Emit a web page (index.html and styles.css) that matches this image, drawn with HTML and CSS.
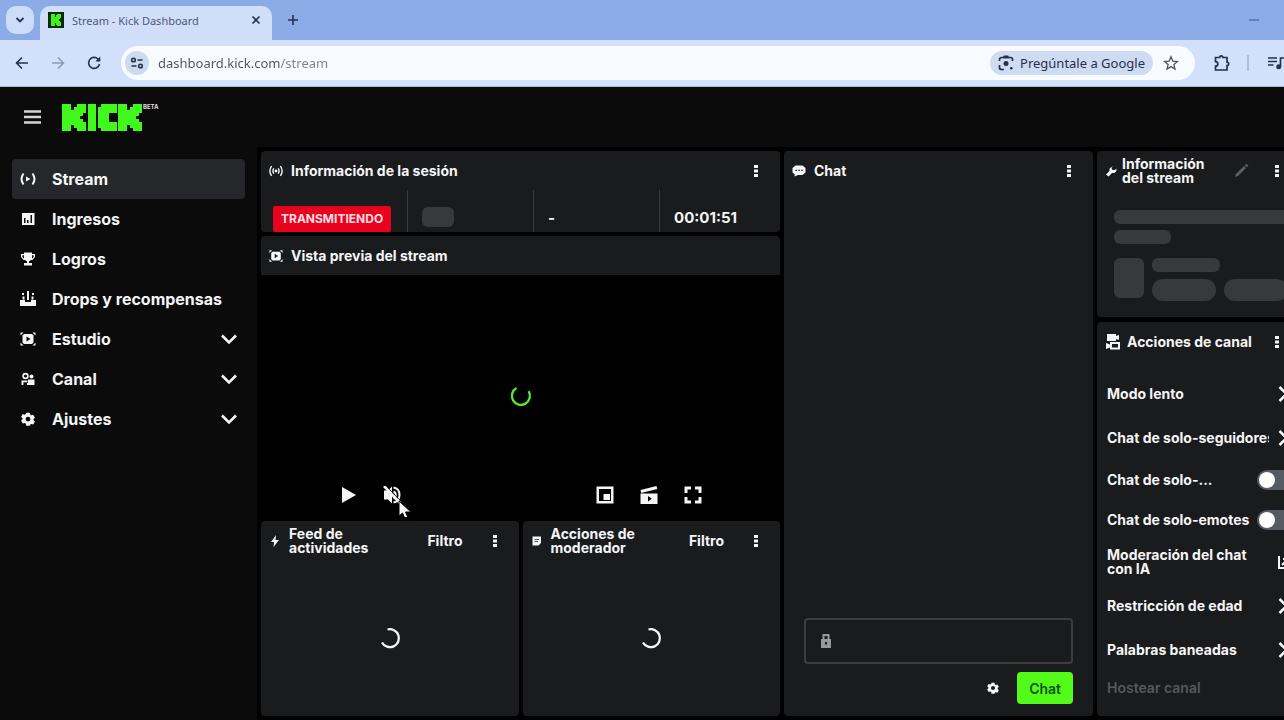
FILE: index.html
```html
<!DOCTYPE html>
<html lang="es">
<head>
<meta charset="utf-8">
<title>Stream - Kick Dashboard</title>
<link rel="stylesheet" href="styles.css">
</head>
<body>
<svg class="defs" aria-hidden="true">
  <symbol id="block-k" viewBox="0 0 8 9"><path shape-rendering="crispEdges" d="M0 0h3v2h1V1h1V0h3v3H7v1H6v1h1v1h1v3H5V8H4V7H3v2H0z"/></symbol>
  <symbol id="kebab" viewBox="0 0 16 16"><rect x="6" y="2" width="4" height="3"/><rect x="6" y="6.500" width="4" height="3"/><rect x="6" y="11" width="4" height="3"/></symbol>
  <symbol id="chevron" viewBox="0 0 16 16"><path d="M1 4.500 8 11.500 15 4.500" fill="none" stroke="currentColor" stroke-width="2.600"/></symbol>
  <symbol id="chevron-right" viewBox="0 0 16 16"><path d="M1.500 1 8.500 8 1.500 15" fill="none" stroke="currentColor" stroke-width="2.600"/></symbol>
  <symbol id="gear" viewBox="0 0 16 16"><path fill-rule="evenodd" d="M6 1h4l.5 2.200 1.200.7 2.100-.7 2 3.400-1.600 1.500v1.300l1.600 1.500-2 3.300-2.100-.7-1.200.7L10 15.500H6l-.5-2.300-1.200-.7-2.100.7-2-3.300 1.600-1.500V7.100L.2 5.600l2-3.100 2.100.7 1.200-.7zM8 5.400a2.700 2.700 0 1 0 0 5.400 2.700 2.700 0 0 0 0-5.400z"/></symbol>
  <symbol id="studio" viewBox="0 0 16 16"><path d="M.5 1.500h3L.5 4.500zM12.500 1.500h3v3zM.5 11.500l3 3h-3zM15.500 11.500v3h-3z"/><path fill-rule="evenodd" d="M4 3h8l1.500 1.500v7L12 13H4l-1.500-1.500v-7zM6.500 5.500v5L10.500 8z"/></symbol>
</svg>

<header class="browser">
  <div class="tabs">
    <button class="tab-search" aria-label="Buscar pestañas"><svg class="i16" viewBox="0 0 16 16"><path d="m4.500 6 3.500 3.500L11.500 6" fill="none" stroke="currentColor" stroke-width="1.800"/></svg></button>
    <div class="tab">
      <svg class="i16" viewBox="0 0 16 16"><rect width="16" height="16" fill="#062b04"/><use href="#block-k" x="2" y="2" width="12" height="12" fill="#3bf51b"/></svg>
      <span class="tab-title">Stream - Kick Dashboard</span>
      <button class="bare" aria-label="Cerrar pestaña"><svg class="i16" viewBox="0 0 16 16"><path d="m4.500 4.500 7 7m0-7-7 7" stroke="currentColor" stroke-width="1.600"/></svg></button>
    </div>
    <button class="bare new-tab" aria-label="Nueva pestaña"><svg class="i16" viewBox="0 0 16 16"><path d="M8 3v10M3 8h10" stroke="currentColor" stroke-width="1.600"/></svg></button>
    <button class="bare minimize" aria-label="Minimizar"><svg class="i16" viewBox="0 0 16 16"><path d="M3 8h10" stroke="currentColor"/></svg></button>
  </div>
  <div class="toolbar">
    <div class="nav-buttons">
      <button class="bare" aria-label="Atrás"><svg class="i16" viewBox="0 0 16 16"><path d="M14 8H3m5-5.500L2.500 8 8 13.500" fill="none" stroke="currentColor" stroke-width="1.600"/></svg></button>
      <button class="bare faded" aria-label="Adelante"><svg class="i16" viewBox="0 0 16 16"><path d="M2 8h11M8 2.500 13.500 8 8 13.500" fill="none" stroke="currentColor" stroke-width="1.600"/></svg></button>
      <button class="bare" aria-label="Recargar"><svg class="i16" viewBox="0 0 16 16"><path d="M13.500 9A5.500 5.500 0 1 1 12 4l1.500 1.600" fill="none" stroke="currentColor" stroke-width="1.600"/><path d="M14.300 1.500v5h-5z"/></svg></button>
    </div>
    <div class="omnibox">
      <button class="site-info" aria-label="Información del sitio"><svg class="i16" viewBox="0 0 16 16"><g fill="none" stroke="currentColor" stroke-width="1.600"><circle cx="4.500" cy="5" r="1.800"/><path d="M8.500 5h5M2.500 11h5"/><circle cx="11.500" cy="11" r="1.800"/></g></svg></button>
      <input class="url" type="text" aria-label="Dirección" value="dashboard.kick.com/stream">
      <button class="ask"><svg class="i16" viewBox="0 0 16 16"><path d="M1.500 6V4.500a2 2 0 0 1 2-2H5M11 2.500h1.500a2 2 0 0 1 2 2V6M1.500 10v2.500a2 2 0 0 0 2 2H6" fill="none" stroke="currentColor" stroke-width="1.700"/><path d="m5 1.500 1-1h4l1 1v2H5z"/><circle cx="8" cy="8.500" r="2.500"/><circle cx="13.300" cy="13.300" r="1.300"/></svg>Pregúntale a Google</button>
      <button class="bare star" aria-label="Añadir a marcadores"><svg class="i16" viewBox="0 0 16 16"><path d="m8 1.800 1.800 4.300 4.700.4-3.600 3 1.100 4.600L8 11.600l-4 2.500 1.100-4.600-3.600-3 4.700-.4z" fill="none" stroke="currentColor" stroke-width="1.300"/></svg></button>
    </div>
    <button class="bare ext" aria-label="Extensiones"><svg class="i18" viewBox="0 0 18 18"><path d="M2.500 3.500h4.200a1.600 1.600 0 0 1 3.200 0H14v4.600a1.700 1.700 0 0 1 0 3.400V16H2.500v-3.800a2.300 2.300 0 0 0 0-4.600z" fill="none" stroke="currentColor" stroke-width="1.700"/></svg></button>
    <span class="bar-rule"></span>
    <button class="bare media" aria-label="Controlar multimedia"><svg class="i18" viewBox="0 0 18 18"><path d="M1 4h9M1 7.500h9M1 11h5.500M13.500 12.500V4H18" fill="none" stroke="currentColor" stroke-width="1.700"/><circle cx="11.700" cy="12.700" r="2.500"/></svg></button>
  </div>
</header>

<div class="app-bar">
  <button class="bare menu" aria-label="Menú"><svg class="i18" viewBox="0 0 18 18"><path d="M0 3.500h17M0 9h17M0 14.500h17" stroke="currentColor" stroke-width="2.600"/></svg></button>
  <a class="logo" href="#" aria-label="Kick">
    <svg viewBox="0 0 80 27"><use href="#block-k" width="24" height="27"/><rect x="26" width="8" height="27"/><path d="M39 0h16v9h-8v9h8v9H39v-3h-3V3h3z"/><use href="#block-k" x="56" width="24" height="27"/></svg>
    <span class="beta">BETA</span>
  </a>
</div>

<div class="app">
  <nav class="sidebar">
    <a class="item active" href="#"><svg class="i16" viewBox="0 0 16 16"><path d="M3.500 2.500Q-.5 8 3.500 13.500M12.500 2.500q4 5.500 0 11" fill="none" stroke="currentColor" stroke-width="2"/><path d="m6 5.500 4.500 2.500L6 10.500z"/></svg><span>Stream</span></a>
    <a class="item" href="#"><svg class="i16" viewBox="0 0 16 16"><path fill-rule="evenodd" d="M2 2h12.500v12H2zM4 7v5h1.500V7zm3 2v3h1.500V9zm3.500-5v8H12V4z"/></svg><span>Ingresos</span></a>
    <a class="item" href="#"><svg class="i16" viewBox="0 0 16 16"><path fill-rule="evenodd" d="M4 1.500h8V3h3v3l-2.500 3H11L9 10.500V12h3v2.500H4V12h3v-1.500L5 9H3.500L1 6V3h3zM2.400 4.300V6L4 7.700V4.300zm9.600 0v3.400L13.600 6V4.300z"/></svg><span>Logros</span></a>
    <a class="item" href="#"><svg class="i16" viewBox="0 0 16 16"><path d="M7 0h2v9H7zM2 2h2v2H2zm10 0h2v2h-2zM2.500 5.500h2v3h-2zm9 0h2v3h-2zM0 9h5v2h6V9h5v6H0z"/></svg><span>Drops y recompensas</span></a>
    <a class="item" href="#"><svg class="i16"><use href="#studio"/></svg><span>Estudio</span><svg class="i16 caret"><use href="#chevron"/></svg></a>
    <a class="item" href="#"><svg class="i16" viewBox="0 0 16 16"><circle cx="5.500" cy="5" r="2.400" fill="none" stroke="currentColor" stroke-width="1.600"/><circle cx="11.500" cy="5.500" r="2"/><path d="M1.500 14V9.500h6v1.700H3.400V14zM8 8.500h6.500V14H7v-2h1z"/></svg><span>Canal</span><svg class="i16 caret"><use href="#chevron"/></svg></a>
    <a class="item" href="#"><svg class="i16" viewBox="-1 -1 18 18"><use href="#gear" width="16" height="16"/></svg><span>Ajustes</span><svg class="i16 caret"><use href="#chevron"/></svg></a>
  </nav>

  <main class="dashboard">
    <div class="col center">
      <section class="panel session">
        <header class="head"><svg class="i14" viewBox="0 0 16 16"><path d="M3 2.500q-4 5.500 0 11M13 2.500q4 5.500 0 11M5.500 5q-2 3 0 6m5-6q2 3 0 6" fill="none" stroke="currentColor" stroke-width="1.600"/><circle cx="8" cy="8" r="1.600"/></svg><h2>Información de la sesión</h2><button class="bare" aria-label="Opciones de la sesión"><svg class="i16"><use href="#kebab"/></svg></button></header>
        <div class="stats">
          <div class="stat live"><span class="badge">TRANSMITIENDO</span></div>
          <div class="stat"><span class="bone viewers"></span></div>
          <div class="stat">-</div>
          <div class="stat">00:01:51</div>
        </div>
      </section>
      <section class="panel preview">
        <header class="head"><svg class="i14"><use href="#studio"/></svg><h2>Vista previa del stream</h2></header>
        <div class="player">
          <svg class="spinner green" viewBox="0 0 24 24"><path d="M7.500 4A9 9 0 1 0 19.600 7.200" fill="none" stroke="currentColor" stroke-width="2.400"/></svg>
          <div class="controls">
            <button class="bare" aria-label="Reproducir"><svg class="i18" viewBox="0 0 18 18"><path d="M3 1v16l14-8z"/></svg></button>
            <button class="bare" aria-label="Activar sonido"><svg class="i18" viewBox="0 0 18 18"><path d="M1 4.500h4l4-4v17l-4-4H1z"/><path d="M10.500 1.500c8 1.500 8 13.500 0 15M10.500 5.500c3 1 3 6 0 7" fill="none" stroke="currentColor" stroke-width="2"/><path d="M4 1 18 15.500" stroke="#000"/><path d="m1 0 16 17" stroke="currentColor" stroke-width="2.600"/></svg>
              <svg class="pointer" viewBox="0 0 14 20"><path d="M1 1v15l3.500-3 2.500 6 3-1.300-2.500-5.700H13z" stroke="#000"/></svg></button>
            <button class="bare right" aria-label="Imagen en imagen"><svg class="i18" viewBox="0 0 18 18"><path fill-rule="evenodd" d="M.5.500h17v17H.5zM3 3v12h12V3zM7.500 8H14v6H7.500z"/></svg></button>
            <button class="bare" aria-label="Crear clip"><svg class="i18" viewBox="0 0 18 18"><path d="M.5 4 16.500 0l.8 3L1.300 7z"/><path fill-rule="evenodd" d="M.5 7.500h17V18H.5zM8 10v5.500l3.800-2.700z"/></svg></button>
            <button class="bare" aria-label="Pantalla completa"><svg class="i18" viewBox="0 0 18 18"><path d="M2 7V2h5M11 2h5v5M16 11v5h-5M7 16H2v-5" fill="none" stroke="currentColor" stroke-width="3"/></svg></button>
          </div>
        </div>
      </section>
      <div class="pair">
        <section class="panel feed">
          <header class="head narrow"><svg class="i12" viewBox="0 0 12 12"><path d="M7 0 2 7h3l-.5 5L10 5H6.500z"/></svg><h2>Feed de actividades</h2><button class="filter">Filtro</button><button class="bare" aria-label="Opciones del feed"><svg class="i16"><use href="#kebab"/></svg></button></header>
          <div class="loading"><svg class="spinner" viewBox="0 0 24 24"><path d="M9.500 3.500A9 9 0 1 1 4 16.500" fill="none" stroke="currentColor" stroke-width="2.300"/></svg></div>
        </section>
        <section class="panel feed">
          <header class="head narrow"><svg class="i12" viewBox="0 0 12 12"><path fill-rule="evenodd" d="M1.500 1.500H10V8L7.500 10.500h-6zM3.500 4v.8H8V4zm0 2v.8H7V6z"/></svg><h2>Acciones de moderador</h2><button class="filter">Filtro</button><button class="bare" aria-label="Opciones de moderador"><svg class="i16"><use href="#kebab"/></svg></button></header>
          <div class="loading"><svg class="spinner" viewBox="0 0 24 24"><path d="M9.500 3.500A9 9 0 1 1 4 16.500" fill="none" stroke="currentColor" stroke-width="2.300"/></svg></div>
        </section>
      </div>
    </div>

    <section class="panel col chat">
      <header class="head"><svg class="i14" viewBox="0 0 14 14"><path fill-rule="evenodd" d="M3.500 1.500h7L13.500 4v4.500L10.500 11H6l-3.500 1.500.3-2L.5 8.500V4zM3.500 5.800v1.200h1.400V5.800zm2.900 0v1.200h1.400V5.800zm2.900 0v1.200h1.400V5.800z"/></svg><h2>Chat</h2><button class="bare" aria-label="Opciones del chat"><svg class="i16"><use href="#kebab"/></svg></button></header>
      <form class="composer">
        <div class="message"><svg class="i16" viewBox="0 0 16 16"><path fill-rule="evenodd" d="M4.500 1h7v5H13v9H3V6h1.500zm2 2v3h3V3zM7 9v2.500h2V9z"/></svg><input type="text" aria-label="Mensaje" disabled></div>
        <div class="send-row"><button class="bare" type="button" aria-label="Ajustes del chat"><svg class="i12"><use href="#gear"/></svg></button><button class="send" type="button">Chat</button></div>
      </form>
    </section>

    <div class="col side">
      <section class="panel info">
        <header class="head narrow"><svg class="i12" viewBox="0 0 12 12"><path d="M8 1 6.500 3 7.500 5 10 5 11.300 3.500 11.500 6 9.500 8H7L3.500 11.500 1 9.500 4.500 6 4.500 3.500z"/></svg><h2>Información del stream</h2><button class="bare pencil" aria-label="Editar"><svg class="i16" viewBox="0 0 16 16"><path d="M2 14 3 11 11 3l2 2-8 8zM11.700 2.300 13.500.7l2 2-1.700 1.600z"/></svg></button><button class="bare" aria-label="Opciones de información"><svg class="i16"><use href="#kebab"/></svg></button></header>
        <div class="bones">
          <span class="bone line"></span><span class="bone short"></span>
          <div class="bone-row"><span class="bone thumb"></span><div class="bone-col"><span class="bone name"></span><div class="tags"><span class="bone tag"></span><span class="bone tag"></span></div></div></div>
        </div>
      </section>
      <section class="panel actions">
        <header class="head"><svg class="i16" viewBox="0 0 16 16"><path d="M2 0h9v2l3-1v5l-3-1v2H2z"/><path fill-rule="evenodd" d="M5 8h10v7.500H5v-2l-4 1.500V9l4 1.500zM7 10v3.500h6V10z"/></svg><h2>Acciones de canal</h2><button class="bare" aria-label="Opciones de canal"><svg class="i16"><use href="#kebab"/></svg></button></header>
        <ul class="list">
          <li><button class="row"><span>Modo lento</span><svg class="i16"><use href="#chevron-right"/></svg></button></li>
          <li><button class="row"><span>Chat de solo-seguidores</span><svg class="i16"><use href="#chevron-right"/></svg></button></li>
          <li><label class="row toggle"><span>Chat de solo-...</span><input type="checkbox"></label></li>
          <li><label class="row toggle"><span>Chat de solo-emotes</span><input type="checkbox"></label></li>
          <li><button class="row ai"><span>Moderación del chat con IA</span><svg class="i16" viewBox="0 0 16 16"><path d="M1 2v12h14V9M4 11l5-5M5 5h5v5" fill="none" stroke="currentColor" stroke-width="2"/></svg></button></li>
          <li><button class="row"><span>Restricción de edad</span><svg class="i16"><use href="#chevron-right"/></svg></button></li>
          <li><button class="row"><span>Palabras baneadas</span><svg class="i16"><use href="#chevron-right"/></svg></button></li>
          <li><button class="row host" disabled><span>Hostear canal</span></button></li>
        </ul>
      </section>
    </div>
  </main>
</div>
</body>
</html>
```

FILE: styles.css
```css
* { box-sizing: border-box; }
body { margin: 0; height: 100vh; display: flex; flex-direction: column; overflow: hidden; background: #0b0b0c; color: #f4f5f6; font-family: Inter, "Liberation Sans", sans-serif; font-size: 14px; font-weight: 700; }
h2, ul { margin: 0; padding: 0; }
ul { list-style: none; }
a { color: inherit; text-decoration: none; }
button { font: inherit; color: inherit; border: 0; padding: 0; background: none; }
svg { display: block; fill: currentColor; flex: none; }
.defs { position: absolute; width: 0; height: 0; }
.bare { display: flex; align-items: center; justify-content: center; flex: none; }
.i12 { width: 12px; height: 12px; }
.i14 { width: 14px; height: 14px; }
.i16 { width: 16px; height: 16px; }
.i18 { width: 18px; height: 18px; }

/* Browser window */
.browser { flex: none; color: #26314a; font-family: "Noto Sans", "Open Sans", sans-serif; font-weight: 400; }
.tabs { display: flex; align-items: center; height: 40px; padding: 0 22px 0 6px; background: #8babe7; }
.tab-search { display: flex; align-items: center; justify-content: center; width: 28px; height: 28px; border-radius: 10px; background: #cddcf9; }
.tab { display: flex; align-items: center; align-self: flex-end; gap: 8px; width: 232px; height: 34px; margin-left: 6px; padding: 0 8px 6px; border-radius: 10px 10px 0 0; background: #d0defa; }
.tab-title { flex: 1; font-size: 11px; color: #4c5a78; white-space: nowrap; }
.new-tab { margin-left: 13px; }
.minimize { margin-left: auto; color: #3d5688; }
.toolbar { display: flex; align-items: center; height: 47px; padding: 0 0 1px 14px; margin-right: -1px; border-bottom: 1px solid #a9b8d6; background: #d3e0fb; }
.nav-buttons { display: flex; gap: 20px; }
.faded { color: #8b9bbb; }
.omnibox { flex: 1; display: flex; align-items: center; height: 34px; margin-left: 19px; padding: 0 16px 0 4px; border-radius: 17px; background: #f8fbff; }
.site-info { display: flex; align-items: center; justify-content: center; width: 24px; height: 24px; border-radius: 50%; background: #cedaf2; }
.url { flex: 1; min-width: 0; margin-left: 9px; padding: 0; border: 0; font: inherit; font-size: 13px; color: #4b5261; background: linear-gradient(90deg, #4b5261 122px, #7b8290 122px); background-clip: text; -webkit-text-fill-color: transparent; }
.ask { display: flex; align-items: center; gap: 6px; height: 24px; padding: 0 8px; border-radius: 12px; background: #cfdbf3; font-size: 13px; }
.star { margin-left: 10px; color: #4b556c; }
.ext { margin-left: 18px; }
.bar-rule { width: 2px; height: 16px; margin: 0 18px 0 16px; background: #aebfe0; }

/* Kick header */
.app-bar { flex: none; display: flex; align-items: center; height: 60px; padding-left: 24px; }
.menu { color: #d5d6d8; }
.logo { display: flex; margin-left: 20px; color: #40fa1e; }
.logo svg { width: 80px; height: 27px; }
.beta { font-size: 6px; line-height: 6px; color: #dcdddf; margin-left: 1px; }

/* Side navigation */
.app { flex: 1; display: flex; min-height: 0; overflow: hidden; }
.sidebar { flex: none; width: 257px; padding: 12px; font-size: 16px; }
.item { display: flex; align-items: center; gap: 16px; height: 40px; padding: 0 8px; border-radius: 4px; }
.active { background: #25272a; }
.caret { margin-left: auto; }

/* Dashboard panels; the last column runs past the window edge */
.dashboard { flex: 1; display: flex; gap: 4px; min-width: 0; margin-right: -21px; padding: 4px; background: #000; }
.panel { border-radius: 4px; background: #1a1b1d; overflow: hidden; min-width: 0; }
.col { display: flex; flex-direction: column; min-width: 0; }
.center { flex: 519; gap: 4px; }
.chat { flex: 309; }
.side { flex: none; width: 204px; gap: 5px; }
.head { flex: none; display: flex; align-items: center; height: 39px; padding: 0 16px 0 8px; }
.head h2 { flex: 1; margin-left: 8px; font-size: 14px; line-height: 14px; font-weight: 700; }
.narrow h2 { padding-right: 16px; }
.filter { margin-right: 24px; }

.session { flex: none; height: 81px; }
.stats { display: grid; grid-template-columns: 29fr 25fr 25fr 24fr; height: 54px; }
.stat { display: flex; align-items: center; padding-left: 14px; border-left: 1px solid #393b3f; font-size: 15px; }
.live { padding: 4px 0 0 12px; border-left: 0; }
.badge { height: 26px; padding: 0 8px; border-radius: 2px; background: #e9021d; color: #ffdfe2; font-size: 12px; line-height: 26px; }
.bone { display: block; border-radius: 6px; background: #37393c; }
.viewers { width: 32px; height: 20px; }

.preview { flex: 1; display: flex; flex-direction: column; border-radius: 4px 4px 0 0; }
.player { flex: 1; position: relative; display: flex; align-items: center; justify-content: center; background: #000; }
.spinner { width: 24px; height: 24px; }
.green { color: #55e534; }
.controls { position: absolute; left: 0; right: 0; bottom: 13px; display: flex; gap: 26px; width: 70%; margin: 0 auto; }
.controls .bare { position: relative; }
.controls .right { margin-left: auto; }
.pointer { position: absolute; left: 15px; top: 14px; width: 14px; height: 20px; }
.pair { flex: none; display: flex; gap: 4px; height: 195px; }
.feed { flex: 1; display: flex; flex-direction: column; }
.loading { flex: 1; display: flex; align-items: center; justify-content: center; }

.composer { margin-top: auto; padding: 0 20px 12px; }
.message { display: flex; align-items: center; height: 46px; padding: 0 12px; border: 2px solid #3b3d40; border-radius: 4px; color: #96989b; }
.message input { flex: 1; min-width: 0; border: 0; background: none; color: inherit; font: inherit; }
.send-row { display: flex; align-items: center; justify-content: flex-end; gap: 18px; margin-top: 8px; }
.send { height: 32px; padding: 0 12px; border-radius: 4px; background: #53fc18; color: #0d5210; font-weight: 600; }

.info { flex: none; height: 166px; }
.info .head h2 { margin-left: 5px; }
.pencil { margin-right: 20px; color: #5d5f62; }
.bones { padding: 20px 10px 0 17px; }
.line { height: 14px; }
.short { width: 57px; height: 14px; margin-top: 6px; }
.bone-row { display: flex; gap: 8px; margin-top: 14px; }
.thumb { width: 30px; height: 40px; flex: none; }
.name { width: 68px; height: 14px; }
.tags { display: flex; gap: 8px; margin-top: 7px; }
.tag { width: 64px; height: 22px; border-radius: 11px; flex: none; }

.actions { flex: 1; }
.actions .head h2 { margin-left: 6px; }
.list { padding: 11px 8px 0 10px; }
.row { display: flex; align-items: center; justify-content: space-between; width: 100%; height: 44px; text-align: left; line-height: 14px; }
.row span { flex: 0 1 162px; overflow: hidden; white-space: nowrap; line-height: 18px; }
.row svg { margin-right: -1px; }
.toggle { height: 40px; }
.toggle input { appearance: none; flex: none; display: flex; align-items: center; width: 36px; height: 20px; margin: 0; padding: 2px; border-radius: 10px; background: #565a62; }
.toggle input::before { content: ""; width: 16px; height: 16px; border-radius: 50%; background: #fff; }
.row.ai span { white-space: normal; line-height: 14px; }
.host { height: 32px; color: #56585c; font-weight: 600; }
```
